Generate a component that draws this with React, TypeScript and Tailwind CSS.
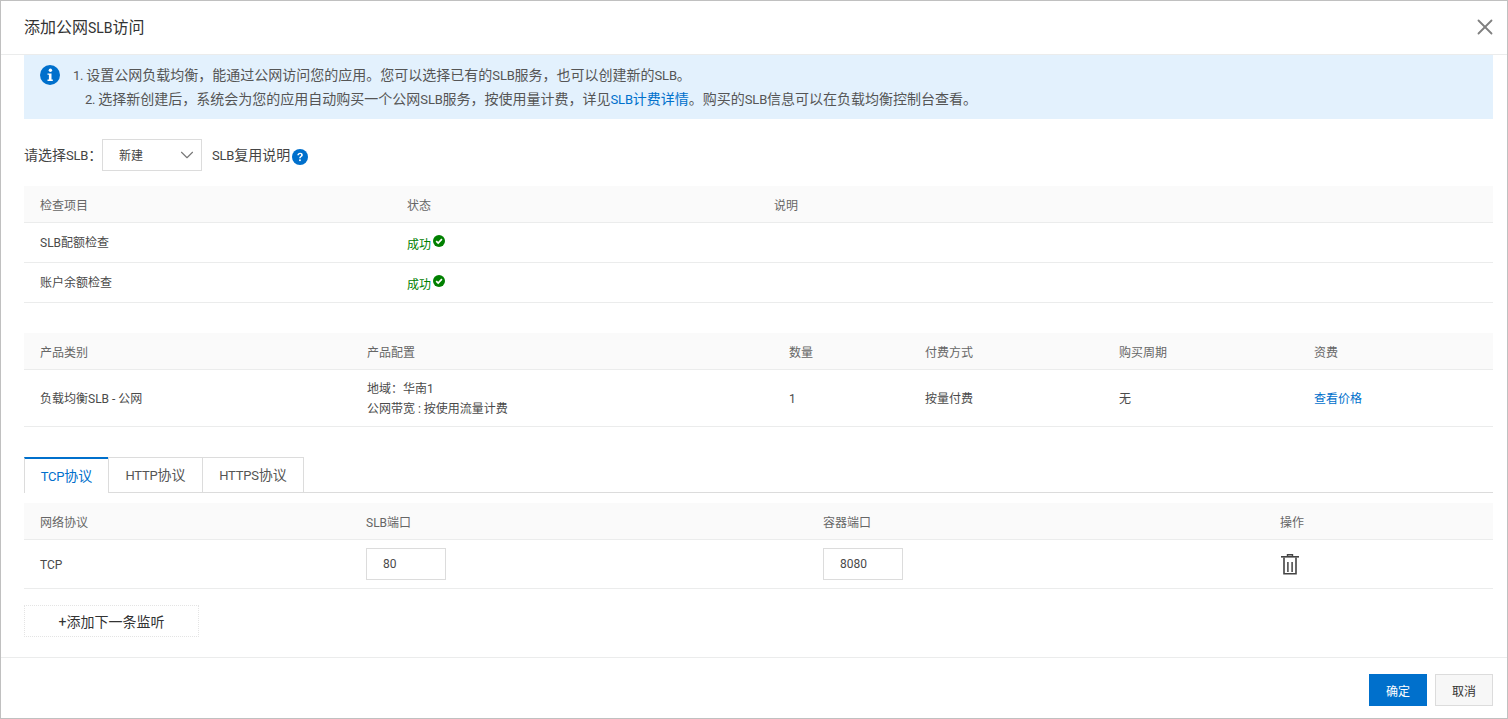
import React from "react";
import { ChevronDown, X } from "lucide-react";

const FONT = "font-['Roboto','Noto_Sans_CJK_SC',sans-serif]";

// latin runs in the reference are narrower than Roboto at the same size
const Lat = ({ children }: { children: React.ReactNode }) => (
  <span className="text-[13px] leading-none tracking-[-0.2px]">{children}</span>
);

const Th = ({ children, w }: { children?: React.ReactNode; w?: string }) => (
  <th className={`${w ?? ""} pl-4 pt-[4px] text-left font-normal text-[12px] text-[#666]`}>{children}</th>
);

const Td = ({ children }: { children?: React.ReactNode }) => (
  <td className="pl-4 pt-[2px] text-[12px] text-[#4a4a4a] align-middle">{children}</td>
);

const CheckIcon = () => (
  <svg viewBox="0 0 12 12" className="w-3 h-3 mb-[6px] ml-[2px]">
    <circle cx="6" cy="6" r="6" fill="#008000" />
    <path d="M3.2 6.1 5.2 8 8.9 4.2" fill="none" stroke="#fff" strokeWidth="1.7" />
  </svg>
);

const Success = () => (
  <span className="inline-flex items-end text-[12px] text-[#008000] leading-[16px] pt-[2px]">
    成功
    <CheckIcon />
  </span>
);

const InfoIcon = () => (
  <svg viewBox="0 0 20 20" className="w-5 h-5 shrink-0 mt-[2px]">
    <circle cx="10" cy="10" r="10" fill="#0070cc" />
    <circle cx="10.4" cy="5.3" r="1.7" fill="#fff" />
    <path d="M7.5 8.4h4v6.2h1.3v1.3H7.5v-1.3h1.4V9.7H7.5z" fill="#fff" />
  </svg>
);

const HelpIcon = () => (
  <svg viewBox="0 0 16 16" className="w-4 h-4 mt-[3px] ml-[2px]">
    <circle cx="8" cy="8" r="8" fill="#0070cc" />
    <path d="M5.3 6.2C5.4 4.6 6.5 3.7 8.1 3.7c1.6 0 2.7.9 2.7 2.2 0 1-.6 1.5-1.3 2-.6.4-.8.7-.8 1.4H7.2c0-1.1.3-1.6 1-2.1.6-.4.9-.7.9-1.2 0-.5-.4-.9-1-.9-.7 0-1.1.4-1.2 1.1z" fill="#fff" />
    <rect x="7.1" y="10.4" width="1.7" height="1.7" fill="#fff" />
  </svg>
);

const TrashIcon = () => (
  <svg viewBox="0 0 18 21" className="w-[18px] h-[21px] ml-[1px] text-[#444]" fill="none" stroke="currentColor">
    <path d="M0 2.8h18" strokeWidth="1.6" />
    <path d="M6.5 2.5V.8h5v1.7" strokeWidth="1.4" />
    <path d="M3 3.5v16.2h12V3.5" strokeWidth="1.6" />
    <path d="M6.9 8v10M11.1 8v10" strokeWidth="1.5" />
  </svg>
);

const PortInput = ({ value }: { value: string }) => (
  <div className="w-20 h-8 border border-[#dcdcdc] pl-4 flex items-center text-[12px] text-[#4a4a4a]">{value}</div>
);

export default function App() {
  return (
    <div className={`${FONT} w-[1508px] h-[719px] bg-white border border-[#c0c0c0] flex flex-col overflow-hidden`}>
      <div className="h-[54px] shrink-0 border-b border-[#ebecec] pl-[23px] pr-[9px] flex items-center justify-between">
        <span className="text-[16px] text-[#333]">添加公网<span className="text-[14px]">SLB</span>访问</span>
        <X className="w-[26px] h-[26px] -mt-[2px] text-[#808080]" strokeWidth={1.7} />
      </div>

      <div className="flex-1 pl-[23px] pr-[14px]">
        <div className="h-[64px] bg-[#e3f1fd] pl-[16px] pt-[8px] flex gap-[13px]">
          <InfoIcon />
          <div className="text-[14px] leading-[24px] text-[#555]">
            <div><Lat>1. </Lat>设置公网负载均衡，能通过公网访问您的应用。您可以选择已有的<Lat>SLB</Lat>服务，也可以创建新的<Lat>SLB</Lat>。</div>
            <div className="pl-3">
              <Lat>2. </Lat>选择新创建后，系统会为您的应用自动购买一个公网<Lat>SLB</Lat>服务，按使用量计费，详见<span className="text-[#0070cc]"><Lat>SLB</Lat>计费详情</span>。购买的<Lat>SLB</Lat>信息可以在负载均衡控制台查看。
            </div>
          </div>
        </div>

        <div className="mt-[20px] flex items-center text-[14px] text-[#444]">
          <span className="w-[78px] shrink-0 whitespace-nowrap">请选择<Lat>SLB</Lat>：</span>
          <div className="w-[100px] h-8 border border-[#dcdcdc] pl-4 pr-[3px] flex items-center justify-between text-[12px]">
            <span className="pt-[2px]">新建</span>
            <ChevronDown className="w-[22px] h-[22px] text-[#777]" strokeWidth={1.2} />
          </div>
          <span className="ml-[10px]"><Lat>SLB</Lat>复用说明</span>
          <HelpIcon />
        </div>

        <table className="w-full table-fixed mt-[15px] border-collapse">
          <thead>
            <tr className="h-[36px] bg-[#fafafa] border-b border-[#ebecec]">
              <Th w="w-[367px]">检查项目</Th>
              <Th w="w-[367px]">状态</Th>
              <Th>说明</Th>
            </tr>
          </thead>
          <tbody>
            <tr className="h-[40px] border-b border-[#ebecec]">
              <Td>SLB配额检查</Td>
              <Td><Success /></Td>
              <Td />
            </tr>
            <tr className="h-[40px] border-b border-[#ebecec]">
              <Td>账户余额检查</Td>
              <Td><Success /></Td>
              <Td />
            </tr>
          </tbody>
        </table>

        <table className="w-full table-fixed mt-[30px] border-collapse">
          <thead>
            <tr className="h-[37px] bg-[#fafafa] border-b border-[#ebecec]">
              <Th w="w-[327px]">产品类别</Th>
              <Th w="w-[422px]">产品配置</Th>
              <Th w="w-[136px]">数量</Th>
              <Th w="w-[194px]">付费方式</Th>
              <Th w="w-[195px]">购买周期</Th>
              <Th>资费</Th>
            </tr>
          </thead>
          <tbody>
            <tr className="h-[57px] border-b border-[#ebecec]">
              <Td>负载均衡SLB - 公网</Td>
              <Td>
                <div className="leading-[20px]">地域：华南1</div>
                <div className="leading-[20px]">公网带宽 : 按使用流量计费</div>
              </Td>
              <Td>1</Td>
              <Td>按量付费</Td>
              <Td>无</Td>
              <Td><span className="text-[#0070cc]">查看价格</span></Td>
            </tr>
          </tbody>
        </table>

        <div className="mt-[30px] h-[36px] flex border-b border-[#dcdcdc] text-[14px]">
          <div className="w-[84px] h-[36px] border-t-2 border-[#0070cc] border-l border-l-[#dcdcdc] bg-white flex items-center justify-center text-[#0070cc]"><span><Lat>TCP</Lat>协议</span></div>
          <div className="w-[94px] h-[35px] border-t border-l border-[#dcdcdc] flex items-center justify-center text-[#555]"><span><Lat>HTTP</Lat>协议</span></div>
          <div className="w-[102px] h-[35px] border-t border-x border-[#dcdcdc] flex items-center justify-center text-[#555]"><span><Lat>HTTPS</Lat>协议</span></div>
        </div>

        <table className="w-full table-fixed mt-[10px] border-collapse">
          <thead>
            <tr className="h-[36px] bg-[#fafafa] border-b border-[#ebecec]">
              <Th w="w-[326px]">网络协议</Th>
              <Th w="w-[457px]">SLB端口</Th>
              <Th w="w-[457px]">容器端口</Th>
              <Th>操作</Th>
            </tr>
          </thead>
          <tbody>
            <tr className="h-[49px] border-b border-[#ebecec]">
              <Td>TCP</Td>
              <td className="pl-4"><PortInput value="80" /></td>
              <td className="pl-4"><PortInput value="8080" /></td>
              <td className="pl-4 pt-[2px]"><TrashIcon /></td>
            </tr>
          </tbody>
        </table>

        <div className="mt-[16px] w-[175px] h-8 pt-[3px] border border-dotted border-[#e4e4e4] flex items-center justify-center text-[14px] text-[#333]">
          +添加下一条监听
        </div>
      </div>

      <div className="h-[61px] shrink-0 border-t border-[#ebecec] pt-[16px] pr-[14px] flex justify-end gap-2 text-[12px]">
        <div className="w-[58px] h-8 pt-[3px] bg-[#0070cc] text-white flex items-center justify-center">确定</div>
        <div className="w-[58px] h-8 pt-[3px] bg-[#f7f7f7] border border-[#dcdcdc] text-[#333] flex items-center justify-center">取消</div>
      </div>
    </div>
  );
}
